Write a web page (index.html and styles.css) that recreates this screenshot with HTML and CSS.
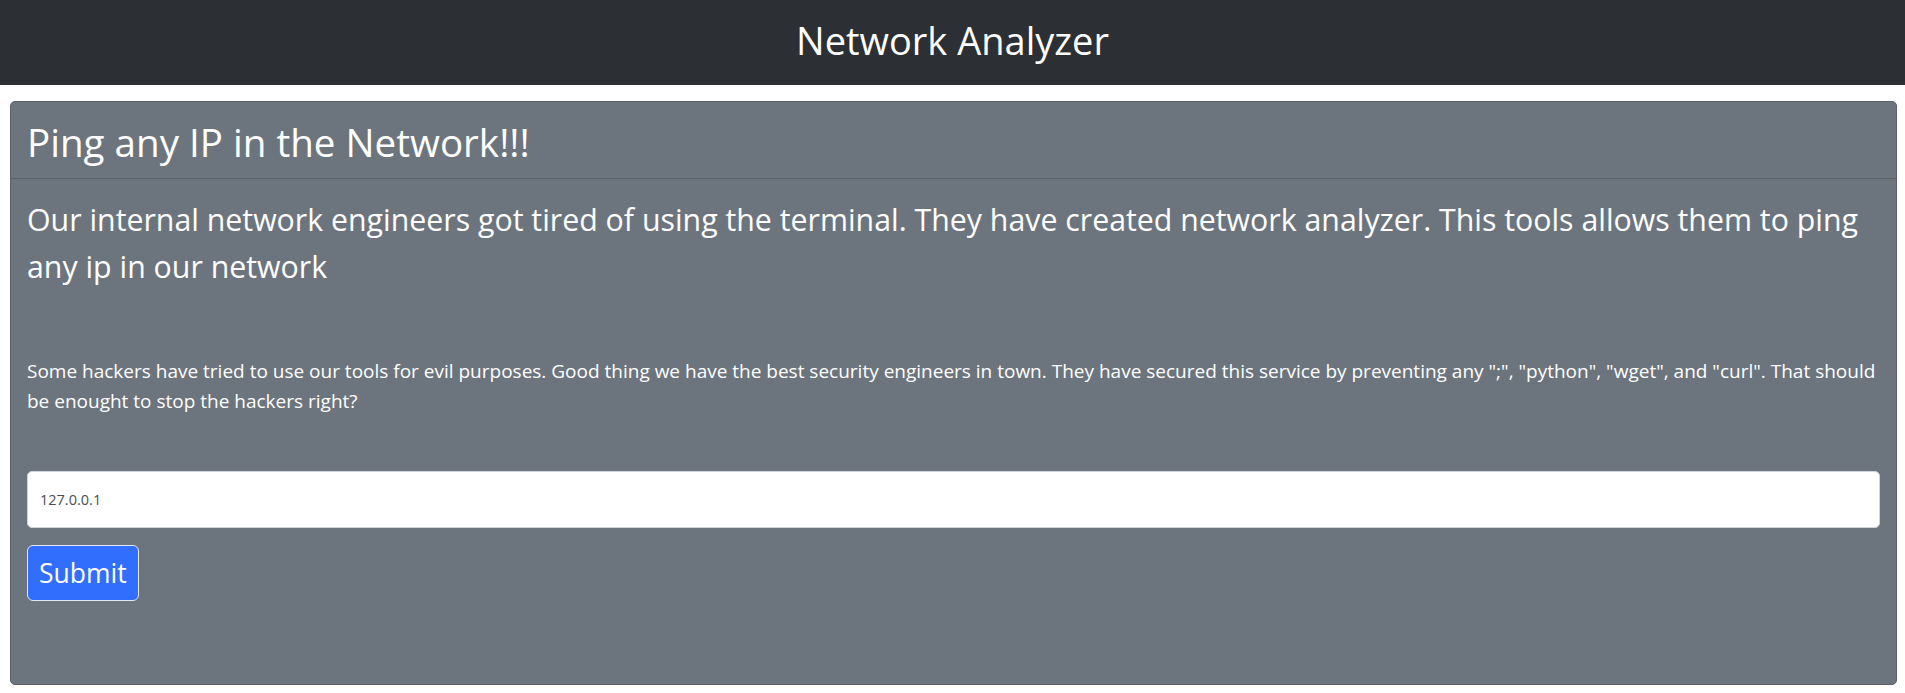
FILE: index.html
```html
<!DOCTYPE html>
<html lang="en">
<head>
<meta charset="utf-8">
<title>Network Analyzer</title>
<link rel="stylesheet" href="styles.css">
</head>
<body>
<header class="topbar">
  <h1 class="topbar-title">Network Analyzer</h1>
</header>
<main class="page">
  <section class="card">
    <div class="card-header">
      <h2 class="card-title">Ping any IP in the Network!!!</h2>
    </div>
    <div class="card-body">
      <p class="lead">Our internal network engineers got tired of using the terminal. They have created network analyzer. This tools allows them to ping any ip in our network</p>
      <p class="note">Some hackers have tried to use our tools for evil purposes. Good thing we have the best security engineers in town. They have secured this service by preventing any ";", "python", "wget", and "curl". That should be enought to stop the hackers right?</p>
      <form class="ping-form" onsubmit="return false;">
        <input class="ip-input" type="text" name="ip" value="127.0.0.1">
        <button class="submit-btn" type="submit">Submit</button>
      </form>
    </div>
  </section>
</main>
</body>
</html>
```

FILE: styles.css
```css
* {
  box-sizing: border-box;
}

html, body {
  margin: 0;
  padding: 0;
}

body {
  font-family: "Open Sans", "Noto Sans", sans-serif;
  background: #ffffff;
  color: #ffffff;
}

.topbar {
  background: #2c2f34;
  height: 85px;
  padding-top: 16px;
  text-align: center;
}

.topbar-title {
  margin: 0;
  font-size: 38px;
  font-weight: 400;
  line-height: 48px;
  color: #ffffff;
}

.page {
  padding: 16px 8px 0 10px;
}

.card {
  background: #6c757d;
  border: 1px solid #5b6269;
  border-radius: 5px;
}

.card-header {
  padding: 16px 16px 12px;
  border-bottom: 1px solid #5b6269;
}

.card-title {
  margin: 0;
  font-size: 38.6px;
  font-weight: 400;
  line-height: 48px;
}

.card-body {
  padding: 17px 16px 83px;
}

.lead {
  margin: 0 0 66px;
  font-size: 30.3px;
  line-height: 47px;
}

.note {
  margin: 0 0 55px;
  font-size: 19px;
  line-height: 30px;
}

.ping-form {
  display: flex;
  flex-direction: column;
  align-items: flex-start;
  gap: 17px;
}

.ip-input {
  width: 100%;
  height: 57px;
  padding: 0 12px;
  border: 1px solid #ced4da;
  border-radius: 5px;
  background: #ffffff;
  font-family: "Open Sans", "Noto Sans", sans-serif;
  font-size: 14.5px;
  color: #495057;
}

.submit-btn {
  height: 56px;
  padding: 0 11px;
  border: 1px solid #e3e8f5;
  border-radius: 6px;
  background: #316efd;
  color: #ffffff;
  font-family: "Open Sans", "Noto Sans", sans-serif;
  font-size: 26.5px;
  line-height: 1;
}
```
